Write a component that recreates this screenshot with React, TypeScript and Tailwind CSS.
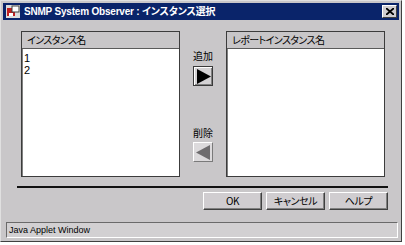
import React from "react"

const jp = "font-['MS_UI_Gothic','Noto_Sans_CJK_JP',sans-serif] [font-feature-settings:'palt']"

function RaisedButton({ label }: { label: string }) {
    return (
        <button
            className={`flex h-[18px] w-[59px] items-center justify-center border border-t-white border-l-white border-r-[#404040] border-b-[#404040] bg-[#d0cdd0] text-[10px] leading-none tracking-[-0.4px] text-black shadow-[inset_-1px_-1px_0_#808080] ${jp}`}
        >
            {label}
        </button>
    )
}

function ArrowButton({ dir, enabled }: { dir: "right" | "left"; enabled: boolean }) {
    return (
        <div
            className={`flex h-[20px] w-[20px] items-center justify-center border ${
                enabled
                    ? "border-[#3a3a3a] bg-[#d4d2d4] shadow-[inset_1px_1px_0_#ffffff,inset_-1px_-1px_0_#808080]"
                    : "border-t-white border-l-white border-r-[#7a7a7a] border-b-[#7a7a7a] bg-[#dcdadc]"
            }`}
        >
            <svg width="15" height="15" viewBox="0 0 15 15">
                {dir === "right" ? (
                    <polygon points="1,0 15,7.5 1,15" fill="#000" />
                ) : (
                    <polygon points="14,0 0,7.5 14,15" fill="#6e6c6e" />
                )}
            </svg>
        </div>
    )
}

function ListBox({ title, items }: { title: string; items: string[] }) {
    return (
        <div className="flex h-[146px] flex-col border border-[#3c3c3c] bg-white shadow-[inset_1px_1px_0_#808080]">
            <div className={`flex h-[17px] items-center border-b border-[#5a5a5a] bg-[#c8c6c8] pl-[5px] text-[10px] leading-none tracking-[-0.6px] text-black ${jp}`}>
                {title}
            </div>
            <div className="flex flex-col pl-[2px] pt-[3px] font-['Liberation_Sans',sans-serif] text-[11px] leading-[12px] text-black">
                {items.map((it) => (
                    <div key={it}>{it}</div>
                ))}
            </div>
        </div>
    )
}

export default function App() {
    return (
        <div className="h-[245px] w-[405px] bg-white">
            <div className="flex h-[242px] w-[402px] flex-col border border-t-[#e0e0e0] border-l-[#e0e0e0] border-r-[#404040] border-b-[#404040] bg-[#c9c7c9] p-[2px]">
                {/* title bar */}
                <div className="flex h-[17px] shrink-0 items-center bg-[#0a246a] pl-[3px] pr-[2px]">
                    <svg width="14" height="13" viewBox="0 0 14 13" className="mr-[4px]">
                        <rect x="0" y="0" width="14" height="13" fill="#dcdcdc" />
                        <rect x="1" y="3" width="8" height="8" fill="#c02020" />
                        <rect x="6" y="1" width="7" height="6" fill="#fff" stroke="#404040" strokeWidth="1" />
                        <rect x="3" y="8" width="4" height="3" fill="#fff" />
                    </svg>
                    <span className="font-['Liberation_Sans','Noto_Sans_CJK_JP',sans-serif] text-[10px] font-bold leading-none tracking-[-0.2px] text-white [font-feature-settings:'palt']">
                        SNMP System Observer : インスタンス選択
                    </span>
                    <div className="ml-auto flex h-[13px] w-[15px] items-center justify-center border border-t-white border-l-white border-r-[#404040] border-b-[#404040] bg-[#d0cdd0]">
                        <svg width="8" height="7" viewBox="0 0 8 7">
                            <path d="M0 0 L8 7 M8 0 L0 7" stroke="#000" strokeWidth="1.8" />
                        </svg>
                    </div>
                </div>

                {/* body */}
                <div className="flex flex-1 flex-col pl-[14px] pr-[11px] pt-[11px]">
                    <div className="ml-[4px] flex w-[364px] shrink-0">
                        <div className="w-[159px] shrink-0">
                            <ListBox title="インスタンス名" items={["1", "2"]} />
                        </div>
                        <div className={`flex w-[46px] shrink-0 flex-col items-center pt-[20px] text-[10px] leading-none text-black ${jp}`}>
                            <div className="mb-[5px] h-[10px]">追加</div>
                            <ArrowButton dir="right" enabled />
                            <div className="mb-[4px] mt-[42px] h-[10px]">削除</div>
                            <ArrowButton dir="left" enabled={false} />
                        </div>
                        <div className="w-[159px] shrink-0">
                            <ListBox title="レポートインスタンス名" items={[]} />
                        </div>
                    </div>

                    <div className="mt-[9px] h-[2px] w-full bg-[#111]" />

                    <div className="mt-[4px] flex justify-end gap-[4px]">
                        <RaisedButton label="OK" />
                        <RaisedButton label="キャンセル" />
                        <RaisedButton label="ヘルプ" />
                    </div>
                </div>

                {/* status bar */}
                <div className="mb-[1px] ml-[3px] mr-[1px] flex h-[16px] items-center border border-t-[#6a6a6a] border-l-[#6a6a6a] border-r-white border-b-white bg-[#d2d0d2] pl-[2px] font-['Liberation_Sans',sans-serif] text-[9px] leading-none text-black">
                    Java Applet Window
                </div>
            </div>
        </div>
    )
}
